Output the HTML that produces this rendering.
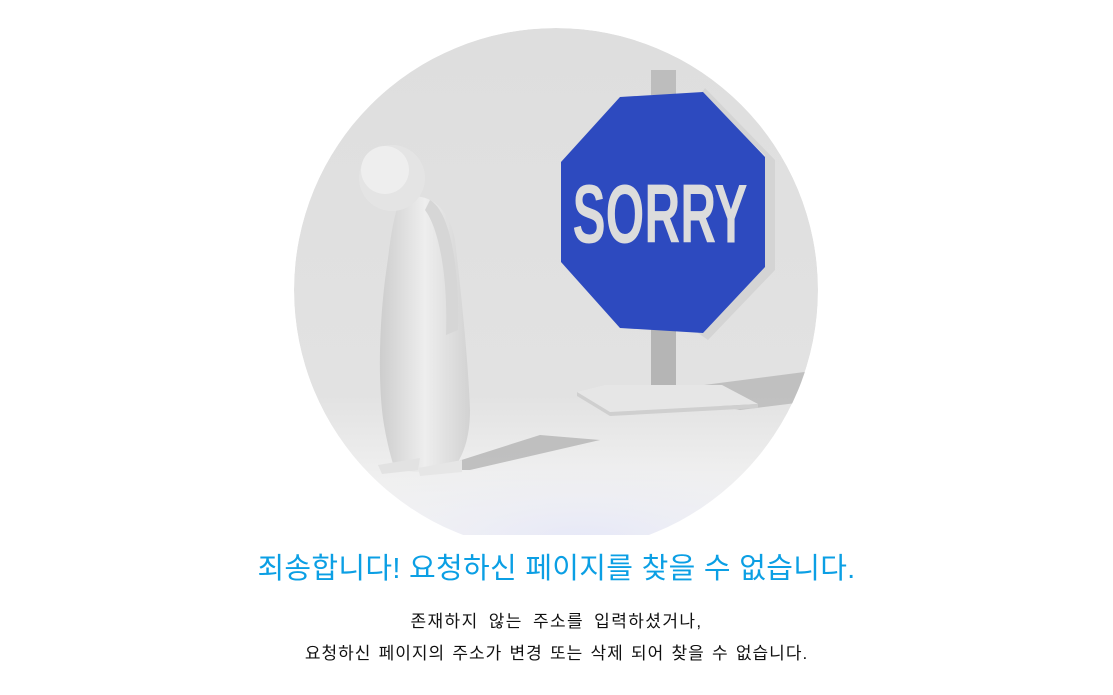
<!DOCTYPE html>
<html><head><meta charset="utf-8"><style>
html,body{margin:0;padding:0;background:#fff;width:1113px;height:695px;overflow:hidden;font-family:"Liberation Sans","Noto Sans CJK KR","NanumGothic",sans-serif}
svg{position:absolute;left:0;top:0}
.t{position:absolute;left:0;width:1113px;text-align:center;white-space:nowrap;line-height:1.2}
</style></head><body>
<svg width="1113" height="695" viewBox="0 0 1113 695">
<defs>
<clipPath id="c"><rect x="0" y="0" width="1113" height="535"/></clipPath>
<clipPath id="cc"><circle cx="556" cy="290" r="262"/></clipPath>
<radialGradient id="fl" cx="0.55" cy="1" r="0.6"><stop offset="0" stop-color="#e6e8f8"/><stop offset="1" stop-color="#f0f0f0" stop-opacity="0"/></radialGradient>
<linearGradient id="bg" x1="0" y1="0" x2="0" y2="1"><stop offset="0" stop-color="#dedede"/><stop offset="0.7" stop-color="#e2e2e2"/><stop offset="0.85" stop-color="#efefef"/><stop offset="1" stop-color="#f5f5f7"/></linearGradient>
<linearGradient id="body" x1="0" y1="0" x2="1" y2="0"><stop offset="0" stop-color="#cdcdcd"/><stop offset="0.5" stop-color="#eeeeee"/><stop offset="1" stop-color="#d2d2d2"/></linearGradient>
</defs>
<g clip-path="url(#c)"><g clip-path="url(#cc)">
<circle cx="556" cy="290" r="262" fill="url(#bg)"/>
<rect x="294" y="380" width="524" height="160" fill="url(#fl)"/>
<path d="M430 470 L540 435 L600 440 L470 470 Z" fill="#adadad" opacity="0.7"/>
<path d="M650 392 L820 370 L820 400 L740 410 Z" fill="#aaa" opacity="0.6"/>
<rect x="651" y="70" width="25" height="25" fill="#bdbdbd"/>
<rect x="651" y="325" width="25" height="68" fill="#b5b5b5"/>
<path d="M577 392 L605 385 L722 385 L758 404 L610 412 Z" fill="#e6e6e6"/>
<path d="M577 392 L610 412 L758 404 L758 408 L610 416 L577 396Z" fill="#cfcfcf"/>
<polygon points="705,88 775,160 775,270 708,340 698,333 765,262 765,155 700,95" fill="#d4d4d4"/>
<polygon points="620,97 703,92 765,157 765,267 703,333 620,328 561,262 561,162" fill="#2d4abf"/>
<text x="660" y="243" text-anchor="middle" font-family="Liberation Sans" font-weight="bold" font-size="80" fill="#dcdcdc" textLength="175" lengthAdjust="spacingAndGlyphs" transform="translate(0,-10) scale(1,1.04)">SORRY</text>
<path d="M400 200 C420 190 448 200 455 240 C462 300 468 360 470 410 C470 440 462 455 458 462 L420 472 L395 470 C390 455 384 430 382 410 C378 370 380 320 385 280 C390 245 392 220 400 200Z" fill="url(#body)"/>
<path d="M378 465 L420 458 L418 470 L382 474Z" fill="#e2e2e2"/>
<path d="M418 468 L462 460 L462 472 L420 476Z" fill="#e6e6e6"/>
<path d="M430 200 C448 210 460 260 458 330 L446 335 C448 280 440 230 425 210Z" fill="#d6d6d6"/>
<circle cx="392" cy="178" r="33" fill="#e4e4e4"/>
<circle cx="385" cy="170" r="24" fill="#eeeeee"/>
</g></g>
</svg>
<div class="t" style="top:552px;font-size:29px;color:#0b9fe4;letter-spacing:0.3px">죄송합니다! 요청하신 페이지를 찾을 수 없습니다.</div>
<div class="t" style="top:612px;font-size:17px;color:#111;letter-spacing:1.4px;word-spacing:4px">존재하지 않는 주소를 입력하셨거나,</div>
<div class="t" style="top:644px;font-size:17px;color:#111;letter-spacing:1px;word-spacing:1.5px">요청하신 페이지의 주소가 변경 또는 삭제 되어 찾을 수 없습니다.</div>
</body></html>
